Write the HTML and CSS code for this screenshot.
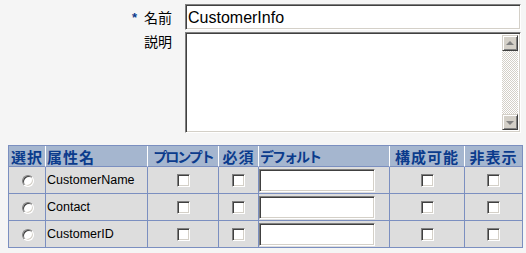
FILE: index.html
```html
<!DOCTYPE html>
<html lang="ja">
<head>
    <meta charset="UTF-8">
    <title>CustomerInfo</title>
    <link rel="stylesheet" href="styles.css">
</head>
<body>
    <div class="fields">
        <label class="field-label" for="name"><span class="req">*</span>名前</label>
        <input class="name-input" id="name" type="text" value="CustomerInfo">
        <label class="field-label top" for="desc">説明</label>
        <div class="memo">
            <textarea id="desc"></textarea>
            <div class="vscroll">
                <span class="sbtn up"></span>
                <span class="strack"></span>
                <span class="sbtn down"></span>
            </div>
        </div>
    </div>

    <table class="attrs">
        <colgroup>
            <col class="c-sel">
            <col class="c-name">
            <col class="c-prompt">
            <col class="c-req">
            <col class="c-def">
            <col class="c-conf">
            <col class="c-hide">
        </colgroup>
        <thead>
            <tr>
                <th>選択</th>
                <th class="left">属性名</th>
                <th class="kana">プロンプト</th>
                <th>必須</th>
                <th class="left kana">デフォルト</th>
                <th>構成可能</th>
                <th>非表示</th>
            </tr>
        </thead>
        <tbody>
            <tr>
                <td class="mid"><input class="rb" type="radio" name="sel"></td>
                <td>CustomerName</td>
                <td class="mid"><input class="cb" type="checkbox"></td>
                <td class="mid"><input class="cb" type="checkbox"></td>
                <td class="field"><input class="def" type="text"></td>
                <td class="mid"><input class="cb" type="checkbox"></td>
                <td class="mid"><input class="cb" type="checkbox"></td>
            </tr>
            <tr>
                <td class="mid"><input class="rb" type="radio" name="sel"></td>
                <td>Contact</td>
                <td class="mid"><input class="cb" type="checkbox"></td>
                <td class="mid"><input class="cb" type="checkbox"></td>
                <td class="field"><input class="def" type="text"></td>
                <td class="mid"><input class="cb" type="checkbox"></td>
                <td class="mid"><input class="cb" type="checkbox"></td>
            </tr>
            <tr>
                <td class="mid"><input class="rb" type="radio" name="sel"></td>
                <td>CustomerID</td>
                <td class="mid"><input class="cb" type="checkbox"></td>
                <td class="mid"><input class="cb" type="checkbox"></td>
                <td class="field"><input class="def" type="text"></td>
                <td class="mid"><input class="cb" type="checkbox"></td>
                <td class="mid"><input class="cb" type="checkbox"></td>
            </tr>
        </tbody>
    </table>
</body>
</html>
```

FILE: styles.css
```css
*{
    box-sizing: border-box;
}
body{
    margin: 0;
    background: #f5f5f5;
    font-family: "Liberation Sans", "Noto Sans CJK JP", sans-serif;
    color: #000;
}

/* top form */
.fields{
    display: grid;
    grid-template-columns: 185px 336px;
    row-gap: 2px;
    padding-top: 4px;
}
.field-label{
    justify-self: end;
    align-self: center;
    padding-right: 13px;
    font: 14px/16px "Noto Sans CJK JP", sans-serif;
}
.field-label.top{
    align-self: start;
    padding-top: 1px;
}
.req{
    color: #0b3b8c;
    font: bold 13px "Liberation Sans", sans-serif;
    margin-right: 7px;
    vertical-align: 1px;
}
.name-input,
.memo,
.def{
    border: 1px solid;
    border-color: #808080 #fff #fff #808080;
    box-shadow: inset 1px 1px #404040, inset -1px -1px #d4d0c8;
    background: #fff;
}
.name-input{
    height: 26px;
    width: 336px;
    padding: 1px 2px 0;
    font: 16px "Liberation Sans", sans-serif;
    outline: none;
}
.memo{
    height: 101px;
    display: flex;
    padding: 2px;
}
.memo textarea{
    flex: 1;
    border: none;
    resize: none;
    outline: none;
    background: #fff;
}
.vscroll{
    width: 16px;
    display: flex;
    flex-direction: column;
}
.strack{
    flex: 1;
    background: repeating-conic-gradient(#d4d0c8 0 25%, #fff 0 50%) 0 0 / 2px 2px;
}
.sbtn{
    height: 16px;
    background: #d4d0c8;
    border: 1px solid;
    border-color: #d4d0c8 #404040 #404040 #d4d0c8;
    box-shadow: inset 1px 1px #fff, inset -1px -1px #808080;
    display: flex;
    justify-content: center;
    align-items: center;
}
.sbtn::after{
    content: "";
    border-left: 4px solid transparent;
    border-right: 4px solid transparent;
}
.sbtn.up::after{
    border-bottom: 4px solid #808080;
    margin-top: -1px;
}
.sbtn.down::after{
    border-top: 4px solid #808080;
    margin-top: 1px;
}

/* attribute table */
.attrs{
    margin: 12px 0 0 8px;
    border-collapse: separate;
    border-spacing: 0;
    table-layout: fixed;
    width: 514px;
    border-left: 1px solid #7b8fc0;
    border-top: 1px solid #7b8fc0;
}
.c-sel{ width: 37px; }
.c-name{ width: 102px; }
.c-prompt{ width: 71px; }
.c-req{ width: 40px; }
.c-def{ width: 131px; }
.c-conf{ width: 75px; }
.c-hide{ width: 58px; }

th{
    height: 21px;
    padding: 0 1px;
    background: #a5b6cf;
    color: #0b3b8c;
    font: bold 15px/19px "Noto Sans CJK JP", sans-serif;
    letter-spacing: 1px;
    white-space: nowrap;
    text-align: center;
    border-right: 1px solid #fff;
    border-bottom: 1px solid #7b8fc0;
}
th:last-child{
    border-right-color: #7b8fc0;
}
th.left{
    text-align: left;
}
th.kana{
    font-size: 14px;
    letter-spacing: -2px;
}
td{
    height: 27px;
    padding: 0 1px;
    background: #dddddd;
    font-size: 12.5px;
    border-right: 1px solid #7b8fc0;
    border-bottom: 1px solid #7b8fc0;
    vertical-align: middle;
}
td.mid{
    text-align: center;
}
td.field{
    padding: 0;
}
.def{
    display: block;
    width: 116px;
    height: 23px;
    margin-top: 1px;
    outline: none;
}
.cb,
.rb{
    appearance: none;
    margin: 0;
    vertical-align: middle;
    background: #fff;
}
.cb{
    width: 13px;
    height: 13px;
    border: 1px solid;
    border-color: #808080 #fff #fff #808080;
    box-shadow: inset 1px 1px #404040, inset -1px -1px #d4d0c8;
}
.rb{
    width: 12px;
    height: 12px;
    border-radius: 50%;
    border: 1px solid;
    border-color: #808080 #fff #fff #808080;
    box-shadow: inset 1px 1px #404040, inset -1px -1px #d4d0c8;
    margin-left: 1px;
}
```
